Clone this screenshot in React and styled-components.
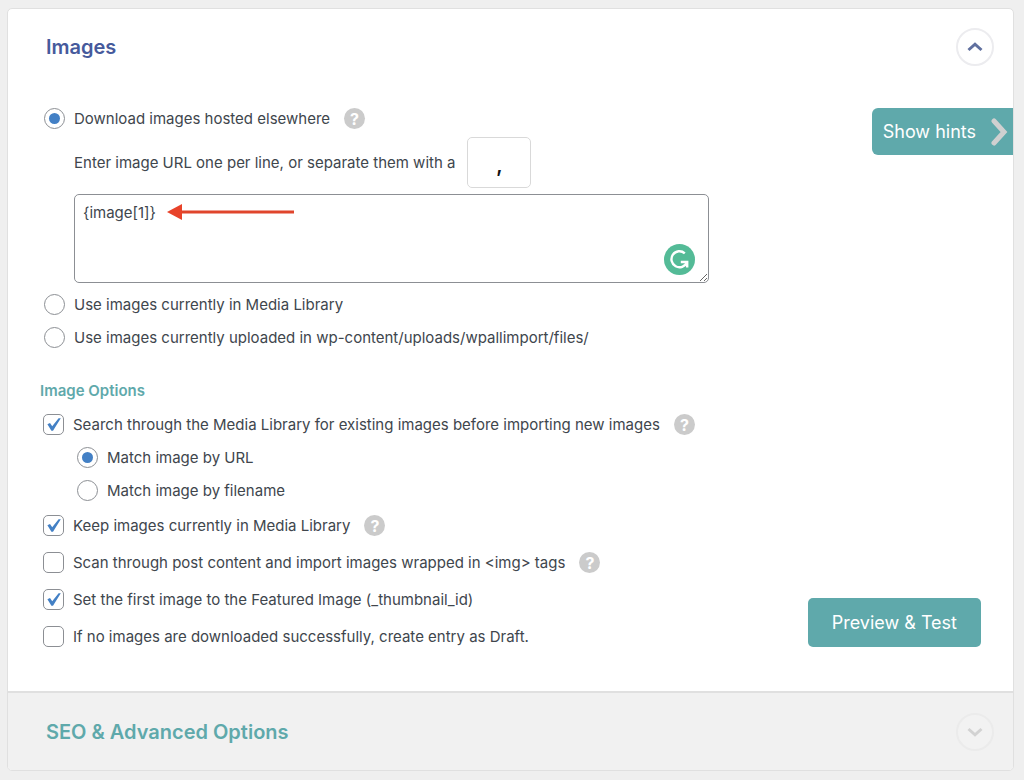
import React, { useState } from "react";
import styled, { createGlobalStyle } from "styled-components";

const GlobalStyle = createGlobalStyle`
  * {
    box-sizing: border-box;
  }
  body {
    margin: 0;
    background: #efefef;
    color: #40464d;
    font-family: Inter, "Liberation Sans", sans-serif;
    font-size: 15px;
    line-height: 20px;
  }
  button, input, textarea {
    font-family: inherit;
  }
`;

const HelpTip = () => (
  <Help type="button" aria-label="Help">
    ?
  </Help>
);

const Option = ({ type, name, label, help, height, indent, ...rest }) => (
  <OptionRow $height={height} $indent={indent}>
    <OptionLabel>
      {type === "radio" ? (
        <Radio type="radio" name={name} {...rest} />
      ) : (
        <Check>
          <input type="checkbox" name={name} {...rest} />
          <svg viewBox="0 0 21 21" aria-hidden="true">
            <path d="M4.4 10.2 L7 9 L9.2 12.3 L15.6 4.3 L17.8 4.3 L10 16.8 L8.4 16.8 Z" />
          </svg>
        </Check>
      )}
      <span>{label}</span>
    </OptionLabel>
    {help && <HelpTip />}
  </OptionRow>
);

const checks = [
  {
    name: "keep",
    label: "Keep images currently in Media Library",
    checked: true,
    help: true,
  },
  {
    name: "scan",
    label: "Scan through post content and import images wrapped in <img> tags",
    checked: false,
    help: true,
  },
  {
    name: "featured",
    label: "Set the first image to the Featured Image (_thumbnail_id)",
    checked: true,
  },
  {
    name: "draft",
    label: "If no images are downloaded successfully, create entry as Draft.",
    checked: false,
  },
];

const App = () => {
  const [source, setSource] = useState("download");
  const [match, setMatch] = useState("url");
  const sourceProps = (value) => ({
    type: "radio",
    name: "source",
    height: 33,
    checked: source === value,
    onChange: () => setSource(value),
  });
  const matchProps = (value) => ({
    type: "radio",
    name: "match",
    height: 33,
    indent: 34,
    checked: match === value,
    onChange: () => setMatch(value),
  });

  return (
    <>
      <GlobalStyle />
      <Card>
        <Header>
          <Title>Images</Title>
          <Toggle type="button" aria-label="Collapse images">
            <svg width="16" height="10" viewBox="0 0 16 10">
              <path d="M1.5 8 L8 2.2 L14.5 8" />
            </svg>
          </Toggle>
        </Header>
        <Source>
          <SourceFields>
            <Option
              {...sourceProps("download")}
              label="Download images hosted elsewhere"
              help
            />
            <Nested>
              <Separator>
                Enter image URL one per line, or separate them with a
                <input type="text" defaultValue="," />
              </Separator>
              <Editor>
                <textarea aria-label="Image URLs" defaultValue="{image[1]}" />
                <Arrow viewBox="0 0 128 16" aria-hidden="true">
                  <path d="M12 8 H127" stroke="#e0452c" strokeWidth="3" />
                  <path d="M0 8 L15 0 V16 Z" fill="#e8432a" />
                </Arrow>
                <Grammar type="button" aria-label="Check writing">
                  <svg width="31" height="31" viewBox="0 0 31 31">
                    <path d="M20.8 9.3 A8 8 0 1 0 22.9 18.2" />
                    <path d="M16.8 18 H23.2 V23.6" />
                  </svg>
                </Grammar>
              </Editor>
            </Nested>
            <Option
              {...sourceProps("library")}
              label="Use images currently in Media Library"
            />
            <Option
              {...sourceProps("files")}
              label="Use images currently uploaded in wp-content/uploads/wpallimport/files/"
            />
          </SourceFields>
          <Hints type="button">
            Show hints
            <svg width="18" height="28" viewBox="0 0 18 28">
              <path d="M4 3 L14 14 L4 25" />
            </svg>
          </Hints>
        </Source>
        <Options>
          <div>
            <Subtitle>Image Options</Subtitle>
            <Option
              type="checkbox"
              name="search"
              height={33}
              defaultChecked
              label="Search through the Media Library for existing images before importing new images"
              help
            />
            <Option {...matchProps("url")} label="Match image by URL" />
            <Option
              {...matchProps("filename")}
              label="Match image by filename"
            />
            {checks.map(({ name, checked, ...item }) => (
              <Option
                {...item}
                key={name}
                type="checkbox"
                name={name}
                height={37}
                defaultChecked={checked}
              />
            ))}
          </div>
          <Preview type="button">Preview &amp; Test</Preview>
        </Options>
        <Footer>
          <Title $muted>SEO &amp; Advanced Options</Title>
          <Toggle type="button" $muted aria-label="Expand SEO options">
            <svg width="16" height="10" viewBox="0 0 16 10">
              <path d="M1.5 2 L8 7.8 L14.5 2" />
            </svg>
          </Toggle>
        </Footer>
      </Card>
    </>
  );
};

const Card = styled.main`
  margin: 8px 10px 10px 7px;
  background: #fff;
  border: 1px solid #e0e0e0;
  border-radius: 5px;
  overflow: hidden;
`;

const Header = styled.header`
  display: flex;
  align-items: center;
  justify-content: space-between;
  height: 76px;
  padding: 0 19px 0 38px;
`;

const Title = styled.h2`
  margin: 0;
  font-size: 20px;
  line-height: 24px;
  font-weight: 600;
  color: ${({ $muted }) => ($muted ? "#5fa9ab" : "#465a9c")};
`;

const Toggle = styled.button`
  display: grid;
  place-items: center;
  width: 38px;
  height: 38px;
  padding: 0;
  border: 2px solid ${({ $muted }) => ($muted ? "#ebebeb" : "#ececef")};
  border-radius: 50%;
  background: ${({ $muted }) => ($muted ? "#f2f2f2" : "#fff")};
  path {
    fill: none;
    stroke: ${({ $muted }) => ($muted ? "#d2d2d2" : "#60709f")};
    stroke-width: 3;
  }
`;

const Source = styled.section`
  display: flex;
  align-items: flex-start;
  justify-content: space-between;
  padding: 17px 0 0 36px;
`;

const SourceFields = styled.div`
  flex: 1;
  max-width: 665px;
`;

const Nested = styled.div`
  padding: 2px 0 5px 30px;
`;

const Separator = styled.label`
  display: flex;
  align-items: center;
  gap: 12px;
  white-space: nowrap;
  input {
    width: 64px;
    height: 51px;
    padding: 4px 0 0;
    border: 1px solid #d9d9d9;
    border-radius: 5px;
    text-align: center;
    font-size: 20px;
    font-weight: 600;
    color: #111;
  }
`;

const Editor = styled.div`
  position: relative;
  margin-top: 6px;
  textarea {
    display: block;
    width: 100%;
    height: 89px;
    padding: 8px;
    border: 1px solid #8c8f94;
    border-radius: 5px;
    font-size: 15px;
    line-height: 20px;
    color: #40464d;
  }
`;

const Arrow = styled.svg`
  position: absolute;
  top: 10px;
  left: 93px;
  width: 128px;
  height: 16px;
`;

const Grammar = styled.button`
  position: absolute;
  right: 14px;
  bottom: 8px;
  width: 31px;
  height: 31px;
  padding: 0;
  border: 0;
  border-radius: 50%;
  background: #54bb97;
  svg {
    display: block;
  }
  path {
    fill: none;
    stroke: #fff;
    stroke-width: 2.4;
  }
`;

const Hints = styled.button`
  display: flex;
  align-items: center;
  gap: 14px;
  height: 47px;
  margin-top: 6px;
  padding: 0 5px 0 11px;
  border: 0;
  border-radius: 6px 0 0 6px;
  background: #5fa9ab;
  color: #fff;
  font-size: 18px;
  white-space: nowrap;
  path {
    fill: none;
    stroke: #d0d0d0;
    stroke-width: 5;
    stroke-linecap: round;
  }
`;

const Options = styled.section`
  display: flex;
  align-items: flex-end;
  justify-content: space-between;
  padding: 25px 32px 36px 35px;
`;

const Subtitle = styled.h3`
  margin: 0 0 5px -3px;
  font-size: 15px;
  line-height: 24px;
  font-weight: 600;
  color: #5fa9ab;
`;

const OptionRow = styled.div`
  display: flex;
  align-items: center;
  gap: 14px;
  min-height: ${({ $height }) => $height}px;
  padding-left: ${({ $indent }) => $indent || 0}px;
`;

const OptionLabel = styled.label`
  display: flex;
  align-items: center;
  gap: 9px;
`;

const Radio = styled.input`
  appearance: none;
  display: grid;
  place-items: center;
  flex: none;
  width: 21px;
  height: 21px;
  margin: 0;
  border: 1px solid #8c8f94;
  border-radius: 50%;
  background: #fff;
  &:checked::before {
    content: "";
    width: 11px;
    height: 11px;
    border-radius: 50%;
    background: #4380c5;
  }
`;

const Check = styled.span`
  display: grid;
  flex: none;
  input,
  svg {
    grid-area: 1 / 1;
    width: 21px;
    height: 21px;
    margin: 0;
  }
  input {
    appearance: none;
    border: 1px solid #8c8f94;
    border-radius: 5px;
    background: #fff;
  }
  svg {
    fill: #4380c5;
    visibility: hidden;
    pointer-events: none;
  }
  input:checked + svg {
    visibility: visible;
  }
`;

const Help = styled.button`
  display: grid;
  place-items: center;
  flex: none;
  width: 21px;
  height: 21px;
  padding: 0;
  border: 0;
  border-radius: 50%;
  background: #cbcbcb;
  color: #fff;
  font-size: 16px;
  line-height: 20px;
  font-weight: 700;
`;

const Preview = styled.button`
  flex: none;
  height: 49px;
  margin-bottom: 8px;
  padding: 0 24px;
  border: 0;
  border-radius: 5px;
  background: #5fa9ab;
  color: #fff;
  font-size: 18px;
`;

const Footer = styled.footer`
  display: flex;
  align-items: center;
  justify-content: space-between;
  height: 79px;
  padding: 0 19px 0 38px;
  border-top: 2px solid #e0e0e0;
  background: #f1f1f1;
`;

export default App;
